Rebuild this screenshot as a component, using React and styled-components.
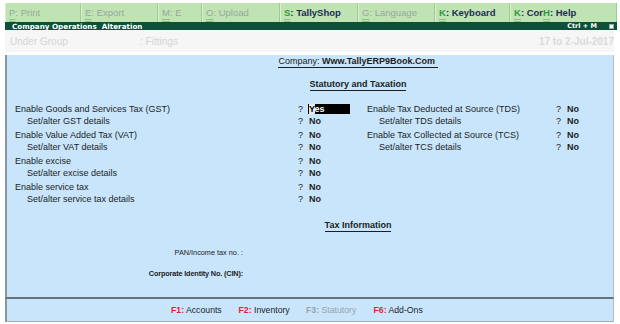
import React from "react";
import styled, { createGlobalStyle } from "styled-components";

const GlobalStyle = createGlobalStyle`
  body {
    margin: 0;
    background: #ffffff;
    font-family: "Liberation Sans", Arial, sans-serif;
  }
`;

const topButtons = [
  { key: "P", label: "Print", width: 76 },
  { key: "E", label: "Export", width: 77 },
  { key: "M", label: "E", width: 44 },
  { key: "O", label: "Upload", width: 78 },
  { key: "S", label: "TallyShop", width: 78, active: true },
  { key: "G", label: "Language", width: 77 },
  { key: "K", label: "Keyboard", width: 75, active: true },
  { key: "K", label: "Cor", extra: "H", extraLabel: "Help", width: 107, active: true },
];

const leftRows = [
  ["Enable Goods and Services Tax (GST)", "Set/alter GST details", true],
  ["Enable Value Added Tax (VAT)", "Set/alter VAT details"],
  ["Enable excise", "Set/alter excise details"],
  ["Enable service tax", "Set/alter service tax details"],
];

const rightRows = [
  ["Enable Tax Deducted at Source (TDS)", "Set/alter TDS details"],
  ["Enable Tax Collected at Source (TCS)", "Set/alter TCS details"],
];

const footerKeys = [
  { key: "F1", label: "Accounts" },
  { key: "F2", label: "Inventory" },
  { key: "F3", label: "Statutory", disabled: true },
  { key: "F6", label: "Add-Ons" },
];

const App = () => {
  return (
    <Screen>
      <GlobalStyle />
      <TopBar>
        {topButtons.map((b, i) => (
          <TopButton key={i} $width={b.width} $active={b.active}>
            <KeyLetter $active={b.active}>{b.key}</KeyLetter>: {b.label}
            {b.extra && (
              <>
                <KeyLetter $active>{b.extra}</KeyLetter>: {b.extraLabel}
              </>
            )}
          </TopButton>
        ))}
      </TopBar>
      <TitleBar>
        <span>Company Operations&nbsp;&nbsp;Alteration</span>
        <TitleRight>
          Ctrl + M <CloseBox />
        </TitleRight>
      </TitleBar>
      <InfoRow>
        <InfoLabel>Under Group</InfoLabel>
        <InfoValue>: Fittings</InfoValue>
        <InfoDate>17 to 2-Jul-2017</InfoDate>
      </InfoRow>
      <Panel>
        <Heading $top={3}>
          <Underlined>
            Company: <b>Www.TallyERP9Book.Com</b>&nbsp;
          </Underlined>
        </Heading>
        <Heading $top={11}>
          <Underlined>
            <b>Statutory and Taxation</b>
          </Underlined>
        </Heading>
        <Columns>
          <Column $labelWidth={283}>
            {leftRows.map(([main, sub, yes], i) => (
              <Group key={i}>
                <Label>{main}</Label>
                <Question>?</Question>
                {yes ? (
                  <YesBox>
                    <Cursor>Y</Cursor>es
                  </YesBox>
                ) : (
                  <Value>No</Value>
                )}
                <Label $sub>{sub}</Label>
                <Question>?</Question>
                <Value>No</Value>
              </Group>
            ))}
          </Column>
          <Column $labelWidth={189}>
            {rightRows.map(([main, sub], i) => (
              <Group key={i}>
                <Label>{main}</Label>
                <Question>?</Question>
                <Value>No</Value>
                <Label $sub>{sub}</Label>
                <Question>?</Question>
                <Value>No</Value>
              </Group>
            ))}
          </Column>
        </Columns>
        <Heading $top={14}>
          <Underlined>
            <b>Tax Information</b>
          </Underlined>
        </Heading>
        <FieldLine $top={16}>PAN/Income tax no. :</FieldLine>
        <FieldLine $top={9} $bold>
          Corporate Identity No. (CIN):
        </FieldLine>
      </Panel>
      <Footer>
        {footerKeys.map((f) => (
          <FooterKey key={f.key} $disabled={f.disabled}>
            <b>{f.key}:</b> {f.label}
          </FooterKey>
        ))}
      </Footer>
    </Screen>
  );
};

const Screen = styled.div`
  width: 620px;
  height: 324px;
  padding-top: 3px;
  box-sizing: border-box;
  overflow: hidden;
`;

const TopBar = styled.div`
  display: flex;
  height: 19px;
  margin: 0 3px 0 5px;
  background: #bfe3b2;
`;

const TopButton = styled.div`
  width: ${(p) => p.$width}px;
  box-sizing: border-box;
  padding: 4px 0 0 3px;
  border-right: 1px solid #9fcb92;
  border-left: 1px solid #d8f0cf;
  font-size: 9.5px;
  color: ${(p) => (p.$active ? "#1c2c55" : "#98a7a0")};
  font-weight: ${(p) => (p.$active ? "bold" : "normal")};
  white-space: nowrap;
`;

const KeyLetter = styled.span`
  color: ${(p) => (p.$active ? "#2f9a3a" : "inherit")};
  text-decoration: underline double;
  text-decoration-color: #8cc47f;
  text-underline-offset: 3px;
`;

const TitleBar = styled.div`
  display: flex;
  justify-content: space-between;
  align-items: center;
  height: 8px;
  margin: 0 3px 0 5px;
  padding: 0 3px 0 7px;
  background: #0d4f39;
  color: #ffffff;
  font-family: "DejaVu Sans", Verdana, sans-serif;
  font-size: 7.2px;
  font-weight: bold;
  white-space: nowrap;
`;

const TitleRight = styled.span`
  display: flex;
  align-items: center;
  gap: 12px;
  font-size: 6.5px;
`;

const CloseBox = styled.span`
  width: 5px;
  height: 5px;
  background: #ffffff;
  border: 1px solid #9aa;
  box-sizing: border-box;
`;

const InfoRow = styled.div`
  display: flex;
  align-items: center;
  height: 22px;
  margin: 0 6px 0 5px;
  padding: 0 0 0 5px;
  background: #f6f6f6;
  color: #d2d5d7;
  font-size: 10px;
`;

const InfoLabel = styled.span`
  width: 130px;
`;

const InfoValue = styled.span`
  flex: 1;
`;

const InfoDate = styled.span`
  font-weight: bold;
  color: #d8dadc;
`;

const Panel = styled.div`
  height: 244px;
  box-sizing: border-box;
  margin: 0 6px 0 5px;
  background: #c8e5fc;
  border-left: 2px solid #8a9399;
  border-right: 1px solid #b0bcc4;
  border-bottom: 2px solid #65737d;
  font-size: 9px;
  color: #1d1d1d;
`;

const Heading = styled.div`
  margin-top: ${(p) => p.$top}px;
  padding-left: 96px;
  text-align: center;
  line-height: 12px;
  font-size: 9px;
`;

const Underlined = styled.span`
  border-bottom: 1px solid #1d1d1d;
  padding-bottom: 1px;
`;

const Columns = styled.div`
  display: flex;
  margin-top: 13px;
  padding-left: 8px;
`;

const Column = styled.div`
  display: grid;
  grid-template-columns: ${(p) => p.$labelWidth}px 11px 58px;
  row-gap: 2px;
  align-content: start;
`;

const Group = styled.div`
  display: contents;
`;

const Label = styled.div`
  grid-column: 1;
  line-height: 12px;
  padding-left: ${(p) => (p.$sub ? 12 : 0)}px;
  white-space: nowrap;
  &:nth-child(4) {
    margin-top: -2px;
  }
`;

const Question = styled.div`
  line-height: 12px;
  &:nth-child(5) {
    margin-top: -2px;
  }
`;

const Value = styled.div`
  line-height: 12px;
  font-weight: bold;
  &:nth-child(6) {
    margin-top: -2px;
  }
`;

const YesBox = styled.div`
  width: 41px;
  height: 10px;
  margin: 1px 0 1px -1px;
  background: #000000;
  color: #ffffff;
  font-weight: bold;
  line-height: 10px;
  padding-left: 1px;
`;

const Cursor = styled.span`
  background: #e8e8e8;
  color: #000000;
`;

const FieldLine = styled.div`
  width: 236px;
  margin-top: ${(p) => p.$top}px;
  text-align: right;
  line-height: 12px;
  font-size: 7.3px;
  font-weight: ${(p) => (p.$bold ? "bold" : "normal")};
  letter-spacing: ${(p) => (p.$bold ? "-0.15px" : "0")};
`;

const Footer = styled.div`
  display: flex;
  align-items: center;
  height: 23px;
  box-sizing: border-box;
  margin: 0 6px 0 5px;
  padding-left: 164px;
  background: #c8e5fc;
  border-left: 2px solid #8a9399;
  border-right: 1px solid #b0bcc4;
  border-bottom: 1px solid #a0aab0;
  font-size: 8.7px;
`;

const FooterKey = styled.div`
  width: 67.5px;
  white-space: nowrap;
  color: ${(p) => (p.$disabled ? "#9aa3aa" : "#1d1d1d")};
  b {
    color: ${(p) => (p.$disabled ? "#9aa3aa" : "#e8202e")};
  }
`;

export default App;
